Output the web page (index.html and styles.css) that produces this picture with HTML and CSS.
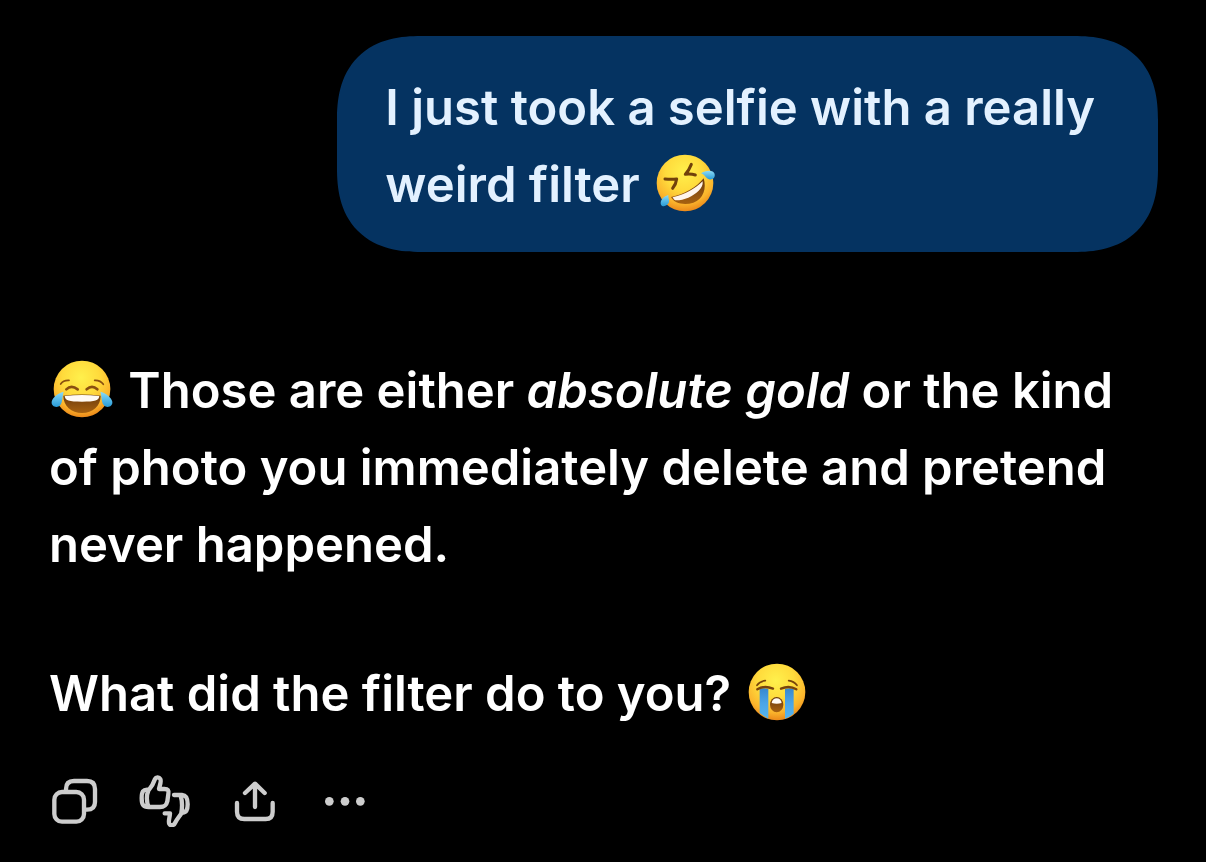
FILE: index.html
```html
<!DOCTYPE html>
<html lang="en">
<head>
<meta charset="utf-8">
<meta name="viewport" content="width=device-width, initial-scale=1">
<title>Chat</title>
<link rel="stylesheet" href="styles.css">
</head>
<body>
<svg class="defs" aria-hidden="true">
  <defs>
    <radialGradient id="face" cx="0.48" cy="0.3" r="0.72">
      <stop offset="0" stop-color="#fff04c"/>
      <stop offset="0.45" stop-color="#ffdb3c"/>
      <stop offset="0.78" stop-color="#fbb42c"/>
      <stop offset="1" stop-color="#e98217"/>
    </radialGradient>
    <linearGradient id="tear" x1="0" y1="0" x2="0" y2="1">
      <stop offset="0" stop-color="#8ddcf8"/>
      <stop offset="1" stop-color="#279bd8"/>
    </linearGradient>
    <linearGradient id="stream" x1="0" y1="0" x2="0" y2="1">
      <stop offset="0" stop-color="#3787cd"/>
      <stop offset="0.5" stop-color="#4ba5e8"/>
      <stop offset="1" stop-color="#55b5ee"/>
    </linearGradient>
    <linearGradient id="mouth" x1="0" y1="0" x2="0" y2="1">
      <stop offset="0" stop-color="#6b3a0c"/>
      <stop offset="1" stop-color="#a76110"/>
    </linearGradient>
  </defs>
</svg>
<main class="chat">
  <section class="bubble">
    <p class="text">I just took a selfie with a really<br>weird filter
      <svg class="emoji" viewBox="0 0 192 192" role="img" aria-label="Rolling on the floor laughing">
        <circle cx="96" cy="96" r="85" fill="url(#face)"/>
        <g fill="none" stroke="#71410b" stroke-width="9" stroke-linejoin="round" stroke-linecap="round">
          <path d="M36 84Q55 86 71 84Q69 100 59 112"/>
          <path d="M115 40Q108 58 97 70Q114 68 127 72"/>
        </g>
        <path d="M54 138C94 130 130 110 152 82C161 112 152 144 121 155C93 164 63 157 54 138Z" fill="url(#mouth)"/>
        <path d="M59 139C98 130 128 112 149 91C150 103 146 110 137 119C120 136 91 149 67 148C63 146 60 142 59 139Z" fill="#fff5ec"/>
        <path d="M144 67C156 59 177 55 184 67C189 79 179 88 168 85C158 82 155 70 144 67Z" fill="url(#tear)"/>
        <path d="M46 132C31 136 20 149 24 161C29 170 44 165 48 154C50 147 45 140 46 132Z" fill="url(#tear)"/>
      </svg>
    </p>
  </section>
  <section class="reply">
    <p class="text">
      <svg class="emoji" viewBox="0 0 192 192" role="img" aria-label="Face with tears of joy">
        <circle cx="96" cy="96" r="85" fill="url(#face)"/>
        <g fill="none" stroke="#8a5010" stroke-linecap="round">
          <path d="M32 81Q40 69 57 70M134 70Q151 69 160 82" stroke-width="5"/>
          <path d="M49 97Q64 82 83 97M110 97Q126 82 142 97" stroke-width="8"/>
        </g>
        <path d="M40 116Q96 109 152 116C152 147 128 168 96 168S40 147 40 116Z" fill="url(#mouth)"/>
        <path d="M44 117Q96 111 148 117C147 130 136 134 96 134S45 130 44 117Z" fill="#fffaf4"/>
        <path d="M41 104C28 107 8 119 5 134C3 149 22 155 31 144C39 133 36 119 41 104Z" fill="url(#tear)"/>
        <path d="M151 104C164 107 184 119 187 134C189 149 170 155 161 144C153 133 156 119 151 104Z" fill="url(#tear)"/>
      </svg>
      Those are either <em>absolute gold</em> or the kind<br>of photo you immediately delete and pretend<br>never happened.</p>
    <p class="text">What did the filter do to you?
      <svg class="emoji" viewBox="0 0 192 192" role="img" aria-label="Loudly crying face">
        <circle cx="96" cy="96" r="85" fill="url(#face)"/>
        <path d="M44 87Q57 82 70 87V176Q56 168 44 159Z" fill="url(#stream)"/>
        <path d="M120 87Q133 82 146 87V161Q134 171 120 176Z" fill="url(#stream)"/>
        <g fill="none" stroke="#79450c" stroke-linecap="round">
          <path d="M36 76Q44 64 61 62M131 62Q147 64 156 76" stroke-width="5"/>
          <path d="M37 88Q58 75 84 86M108 86Q133 75 154 88" stroke-width="7"/>
        </g>
        <ellipse cx="95" cy="134" rx="20" ry="23" fill="url(#mouth)"/>
        <path d="M80 129C81 110 109 110 110 129Q95 133 80 129Z" fill="#fffaf4"/>
      </svg>
    </p>
  </section>
  <div class="actions">
    <button class="action" type="button" aria-label="Copy">
      <svg class="icon" viewBox="27 30 156 156">
        <rect x="43" y="81" width="89" height="89" rx="23"/>
        <path d="M78 80V72Q78 48 102 48H141Q165 48 165 72V111Q165 134 141 134H133"/>
      </svg>
    </button>
    <button class="action" type="button" aria-label="Rate response">
      <svg class="icon" viewBox="297 30 156 156">
        <path d="M325 74C309 72 305 80 305 99C305 119 309 126 326 126H360C374 126 379 122 382 109L385 87C387 76 384 72 373 72H357C359 61 365 49 361 42C357 35 348 36 345 42C340 57 334 67 325 77C319 89 319 112 326 126"/>
        <path d="M402 90H426C439 91 443 99 443 118C443 136 439 142 425 143C420 153 411 161 405 174C401 183 391 182 388 177C384 169 389 161 390 145H374M422 92C427 109 427 127 424 143"/>
      </svg>
    </button>
    <button class="action" type="button" aria-label="Share">
      <svg class="icon" viewBox="27 30 156 156">
        <path d="M51 114V140Q51 162 73 162H137Q158 162 158 140V114M105 126V57M75 84L105 56L134 84"/>
      </svg>
    </button>
    <button class="action" type="button" aria-label="More">
      <svg class="icon icon-dots" viewBox="297 30 156 156">
        <circle cx="328" cy="109" r="13"/>
        <circle cx="375" cy="109" r="13"/>
        <circle cx="421" cy="109" r="13"/>
      </svg>
    </button>
  </div>
</main>
</body>
</html>
```
FILE: styles.css
```css
body {
  margin: 0;
  background: #000;
  color: #fff;
  font-family: Inter, "Noto Sans", sans-serif;
  font-size: 49px;
  font-weight: 600;
  line-height: 77px;
}

.defs {
  position: absolute;
  width: 0;
  height: 0;
}

.chat {
  display: flex;
  flex-direction: column;
  padding: 36px 48px 34px 49px;
}

.bubble {
  box-sizing: border-box;
  align-self: flex-end;
  width: 74%;
  padding: 33px 48px 29px;
  border-radius: 72px;
  background: #053361;
  color: #e3f1ff;
}

@supports (corner-shape: superellipse(1.27)) {
  .bubble {
    border-radius: 84px;
    corner-shape: superellipse(1.27);
  }
}

.text {
  margin: 0;
  white-space: nowrap;
}

.reply {
  display: flex;
  flex-direction: column;
  gap: 72px;
  margin-top: 100px;
}

.emoji {
  width: 64px;
  height: 64px;
  margin: -12px 2px -12px 1px;
  vertical-align: -1px;
}

.actions {
  display: flex;
  gap: 38px;
  margin-top: 43px;
}

.action {
  display: flex;
  padding: 0;
  border: 0;
  background: none;
  color: #cdcdcd;
  cursor: pointer;
}

.icon {
  width: 52px;
  height: 52px;
  fill: none;
  stroke: currentColor;
  stroke-width: 13;
  stroke-linecap: round;
  stroke-linejoin: round;
}

.icon-dots {
  fill: currentColor;
  stroke: none;
}
```
